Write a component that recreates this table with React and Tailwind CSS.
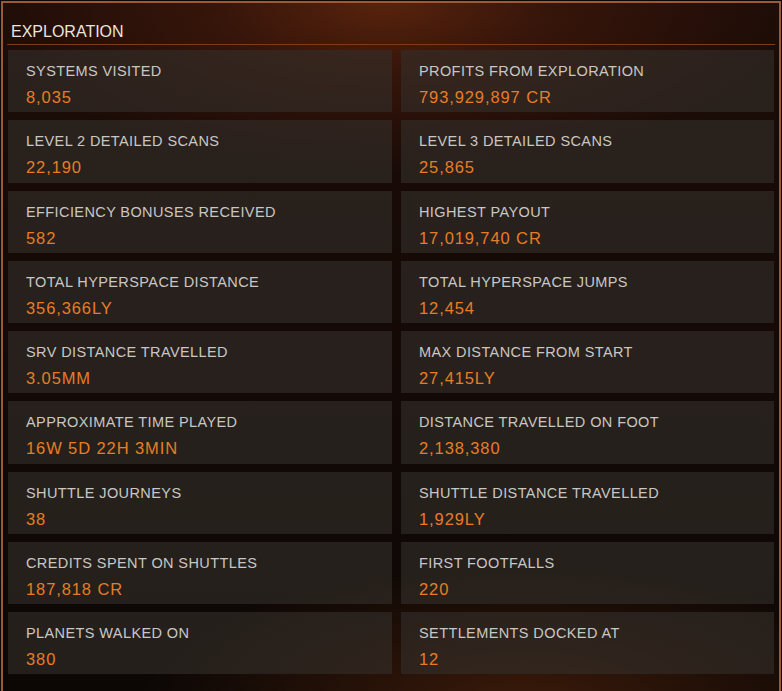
const rows = [
  ["SYSTEMS VISITED", "8,035", "PROFITS FROM EXPLORATION", "793,929,897 CR"],
  ["LEVEL 2 DETAILED SCANS", "22,190", "LEVEL 3 DETAILED SCANS", "25,865"],
  ["EFFICIENCY BONUSES RECEIVED", "582", "HIGHEST PAYOUT", "17,019,740 CR"],
  ["TOTAL HYPERSPACE DISTANCE", "356,366LY", "TOTAL HYPERSPACE JUMPS", "12,454"],
  ["SRV DISTANCE TRAVELLED", "3.05MM", "MAX DISTANCE FROM START", "27,415LY"],
  ["APPROXIMATE TIME PLAYED", "16W 5D 22H 3MIN", "DISTANCE TRAVELLED ON FOOT", "2,138,380"],
  ["SHUTTLE JOURNEYS", "38", "SHUTTLE DISTANCE TRAVELLED", "1,929LY"],
  ["CREDITS SPENT ON SHUTTLES", "187,818 CR", "FIRST FOOTFALLS", "220"],
  ["PLANETS WALKED ON", "380", "SETTLEMENTS DOCKED AT", "12"],
];

function Card({ label, value }) {
  return (
    <div className="h-[62.25px] bg-[rgba(52,46,42,0.62)] pl-[18px] flex flex-col pt-[12px]">
      <div className="text-[14.5px] leading-[18px] tracking-[0.4px] text-[#c9c7c4]">{label}</div>
      <div className="mt-[7px] text-[16.5px] leading-[20px] tracking-[0.9px] text-[#e67d26]">{value}</div>
    </div>
  );
}

export default function App() {
  const cells = [];
  rows.forEach((r, i) => {
    cells.push(<Card key={i + "a"} label={r[0]} value={r[1]} />);
    cells.push(<Card key={i + "b"} label={r[2]} value={r[3]} />);
  });
  return (
    <div
      className="w-[782px] h-[691px] overflow-hidden bg-[#0d0705]"
      style={{ fontFamily: '"Liberation Sans", Arial, sans-serif' }}
    >
      <div className="ml-[1px] mt-[1px] w-[780px] h-[690px] border-t-2 border-x-2 border-[#9c5a33] bg-[radial-gradient(ellipse_420px_170px_at_380px_0px,#58230c_0%,#36150a_40%,rgba(20,8,5,0)_100%),radial-gradient(ellipse_380px_140px_at_520px_700px,#3a1a0a_0%,rgba(20,8,5,0)_100%),linear-gradient(#1c0c07,#0c0705)]">
        <div className="h-[41px] pl-[8px] pt-[19px] text-[16px] leading-[20px] tracking-[0px] text-[#ece4dc]">
          EXPLORATION
        </div>
        <div className="mx-[4px] h-[1px] bg-[#7c3c1c]"></div>
        <div className="mt-[5px] ml-[5px] grid grid-cols-[384px_373px] gap-x-[9px] gap-y-[8px]">
          {cells}
        </div>
      </div>
    </div>
  );
}
